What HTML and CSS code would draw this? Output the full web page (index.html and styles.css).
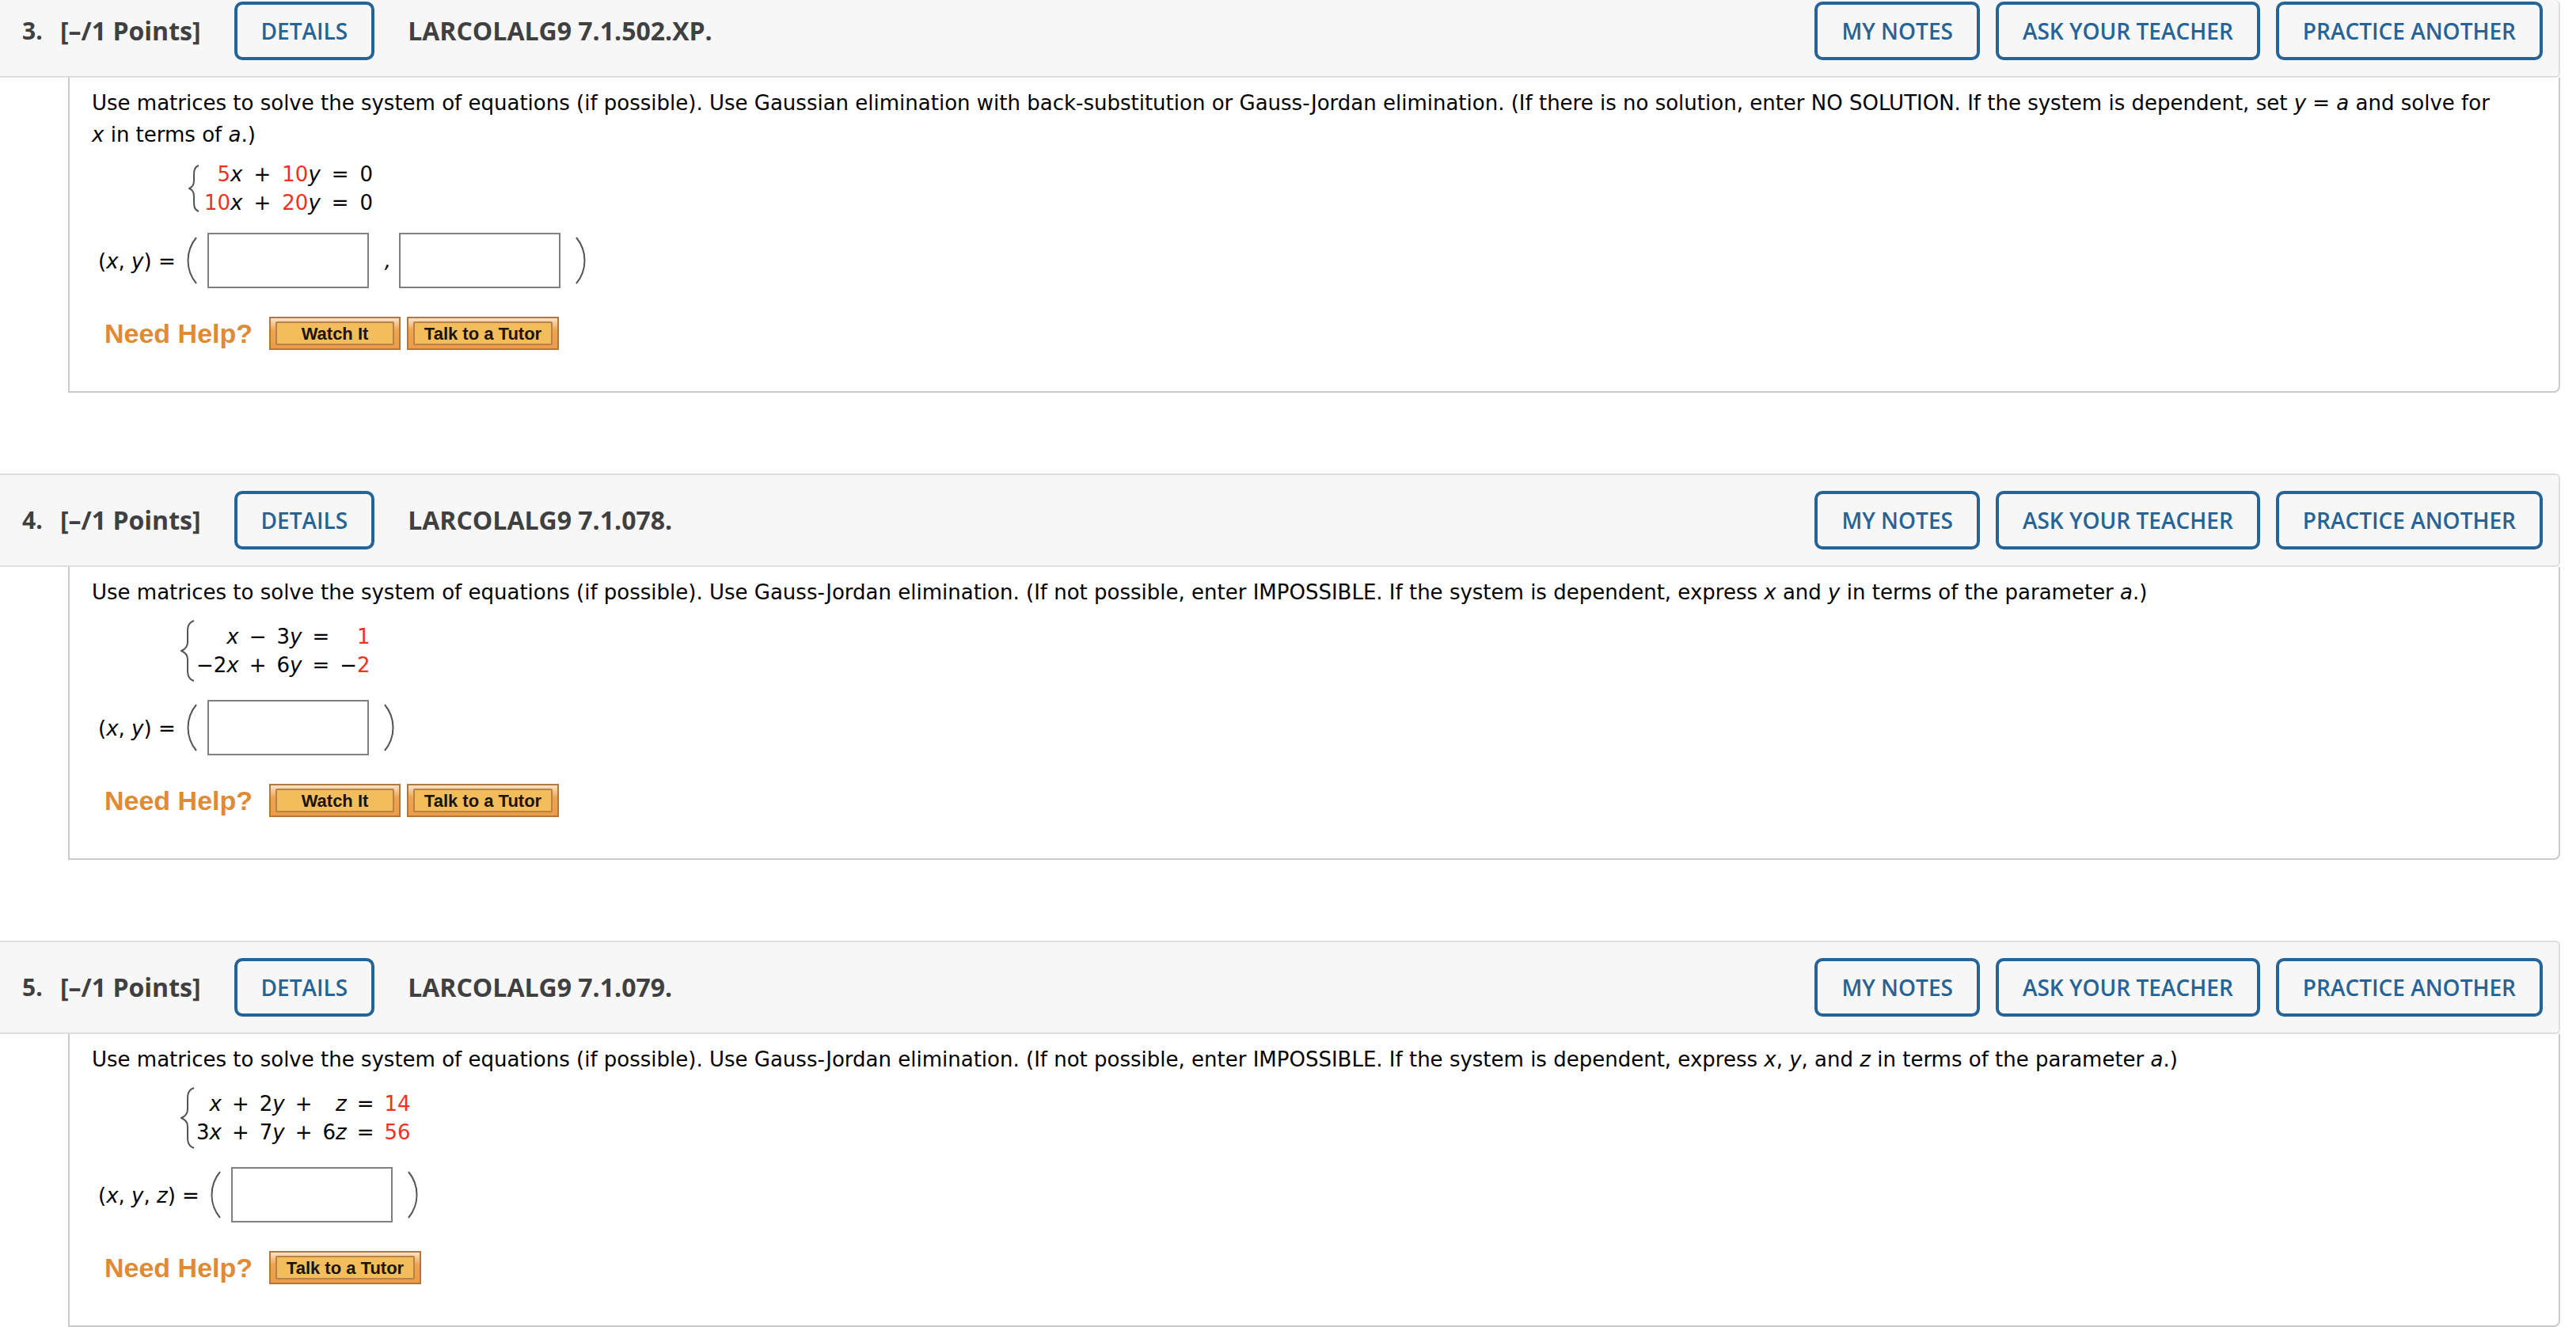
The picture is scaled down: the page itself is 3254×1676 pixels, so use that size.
FILE: index.html
```
<!DOCTYPE html>
<html lang="en">
<head>
    <meta charset="UTF-8">
    <meta name="viewport" content="width=device-width, initial-scale=1.0">
    <title>Homework</title>
    <link rel="stylesheet" href="styles.css">
</head>
<body>

<div class="assignment">

    <!-- Question 3 -->
    <section class="question">
        <header class="question-header">
            <span class="number">3.</span>
            <span class="points">[–/1 Points]</span>
            <button class="btn btn-details" type="button">DETAILS</button>
            <span class="source">LARCOLALG9 7.1.502.XP.</span>
            <div class="actions">
                <button class="btn" type="button">MY NOTES</button>
                <button class="btn" type="button">ASK YOUR TEACHER</button>
                <button class="btn" type="button">PRACTICE ANOTHER</button>
            </div>
        </header>
        <div class="question-body">
            <p class="prompt">Use matrices to solve the system of equations (if possible). Use Gaussian elimination with back-substitution or Gauss-Jordan elimination. (If there is no solution, enter NO SOLUTION. If the system is dependent, set <i>y</i> = <i>a</i> and solve for <i>x</i>&nbsp;in terms of <i>a</i>.)</p>
            <div class="system system-short">
                <svg class="brace" viewBox="0 0 14 60"><path d="M13 1C7 3 7 9 7 14V20C7 26 5 28 1 30C5 32 7 34 7 40V46C7 51 7 57 13 59"/></svg>
                <table class="equations">
                    <tr><td><em>5</em><i>x</i></td><td class="op">+</td><td><em>10</em><i>y</i></td><td class="op">=</td><td>0</td></tr>
                    <tr><td><em>10</em><i>x</i></td><td class="op">+</td><td><em>20</em><i>y</i></td><td class="op">=</td><td>0</td></tr>
                </table>
            </div>
            <div class="answer">
                <label for="q3x">(<i>x</i>, <i>y</i>) =</label>
                <svg class="paren" viewBox="0 0 14 60"><path d="M12 1C-2 18 -2 42 12 59"/></svg>
                <input type="text" id="q3x">
                <i class="comma">,</i>
                <input type="text" id="q3y" aria-label="y">
                <svg class="paren close" viewBox="0 0 14 60"><path d="M2 1C16 18 16 42 2 59"/></svg>
            </div>
            <div class="help">
                <span class="help-title">Need Help?</span>
                <button class="help-btn watch" type="button"><span>Watch It</span></button>
                <button class="help-btn tutor" type="button"><span>Talk to a Tutor</span></button>
            </div>
        </div>
    </section>

    <!-- Question 4 -->
    <section class="question">
        <header class="question-header">
            <span class="number">4.</span>
            <span class="points">[–/1 Points]</span>
            <button class="btn btn-details" type="button">DETAILS</button>
            <span class="source">LARCOLALG9 7.1.078.</span>
            <div class="actions">
                <button class="btn" type="button">MY NOTES</button>
                <button class="btn" type="button">ASK YOUR TEACHER</button>
                <button class="btn" type="button">PRACTICE ANOTHER</button>
            </div>
        </header>
        <div class="question-body">
            <p class="prompt">Use matrices to solve the system of equations (if possible). Use Gauss-Jordan elimination. (If not possible, enter IMPOSSIBLE. If the system is dependent, express <i>x</i> and <i>y</i> in terms of the parameter <i>a</i>.)</p>
            <div class="system">
                <svg class="brace" viewBox="0 0 18 78"><path d="M17 1C9 4 9 10 9 16V28C9 34 6 37 1 39C6 41 9 44 9 50V62C9 68 9 74 17 77"/></svg>
                <table class="equations">
                    <tr><td><i>x</i></td><td class="op">−</td><td>3<i>y</i></td><td class="op">=</td><td><em>1</em></td></tr>
                    <tr><td>−2<i>x</i></td><td class="op">+</td><td>6<i>y</i></td><td class="op">=</td><td>−<em>2</em></td></tr>
                </table>
            </div>
            <div class="answer">
                <label for="q4">(<i>x</i>, <i>y</i>) =</label>
                <svg class="paren" viewBox="0 0 14 60"><path d="M12 1C-2 18 -2 42 12 59"/></svg>
                <input type="text" id="q4">
                <svg class="paren close" viewBox="0 0 14 60"><path d="M2 1C16 18 16 42 2 59"/></svg>
            </div>
            <div class="help">
                <span class="help-title">Need Help?</span>
                <button class="help-btn watch" type="button"><span>Watch It</span></button>
                <button class="help-btn tutor" type="button"><span>Talk to a Tutor</span></button>
            </div>
        </div>
    </section>

    <!-- Question 5 -->
    <section class="question">
        <header class="question-header">
            <span class="number">5.</span>
            <span class="points">[–/1 Points]</span>
            <button class="btn btn-details" type="button">DETAILS</button>
            <span class="source">LARCOLALG9 7.1.079.</span>
            <div class="actions">
                <button class="btn" type="button">MY NOTES</button>
                <button class="btn" type="button">ASK YOUR TEACHER</button>
                <button class="btn" type="button">PRACTICE ANOTHER</button>
            </div>
        </header>
        <div class="question-body">
            <p class="prompt">Use matrices to solve the system of equations (if possible). Use Gauss-Jordan elimination. (If not possible, enter IMPOSSIBLE. If the system is dependent, express <i>x</i>, <i>y</i>, and <i>z</i> in terms of the parameter <i>a</i>.)</p>
            <div class="system">
                <svg class="brace" viewBox="0 0 18 78"><path d="M17 1C9 4 9 10 9 16V28C9 34 6 37 1 39C6 41 9 44 9 50V62C9 68 9 74 17 77"/></svg>
                <table class="equations">
                    <tr><td><i>x</i></td><td class="op">+</td><td>2<i>y</i></td><td class="op">+</td><td><i>z</i></td><td class="op">=</td><td><em>14</em></td></tr>
                    <tr><td>3<i>x</i></td><td class="op">+</td><td>7<i>y</i></td><td class="op">+</td><td>6<i>z</i></td><td class="op">=</td><td><em>56</em></td></tr>
                </table>
            </div>
            <div class="answer">
                <label for="q5">(<i>x</i>, <i>y</i>, <i>z</i>) =</label>
                <svg class="paren" viewBox="0 0 14 60"><path d="M12 1C-2 18 -2 42 12 59"/></svg>
                <input type="text" id="q5">
                <svg class="paren close" viewBox="0 0 14 60"><path d="M2 1C16 18 16 42 2 59"/></svg>
            </div>
            <div class="help">
                <span class="help-title">Need Help?</span>
                <button class="help-btn tutor" type="button"><span>Talk to a Tutor</span></button>
            </div>
        </div>
    </section>

</div>

</body>
</html>
```

FILE: styles.css
```
* {
    box-sizing: border-box;
}
body {
    margin: 0;
    background-color: #fff;
    color: #000;
    font-family: Verdana, "DejaVu Sans", sans-serif;
    font-size: 26px;
    line-height: 40px;
}
.assignment {
    padding-right: 20px;
}
.question {
    margin-bottom: 102px;
}
.question:last-child {
    margin-bottom: 0;
}

/* Header bar */
.question-header {
    display: flex;
    align-items: center;
    padding: 20px 20px 20px 28px;
    border: 2px solid #dedede;
    border-left: none;
    border-radius: 0 6px 6px 0;
    background-color: #f7f7f7;
    color: #404040;
    font-family: "Open Sans", sans-serif;
    font-size: 32px;
    font-weight: 700;
}
.question:first-child .question-header {
    padding-top: 2px;
    border-top: none;
}
.number {
    width: 48px;
    font-size: 30px;
}
.btn {
    height: 74px;
    padding: 0 30px;
    border: 4px solid #266396;
    border-radius: 10px;
    background-color: transparent;
    color: #266396;
    font-family: inherit;
    font-size: 28px;
    font-weight: 600;
    cursor: pointer;
}
.btn:hover {
    background-color: #e8f0f7;
}
.btn-details {
    margin: 0 42px;
}
.actions {
    display: flex;
    gap: 20px;
    margin-left: auto;
}

/* Question body */
.question-body {
    margin-left: 86px;
    padding: 12px 44px 52px 28px;
    border: 2px solid #cacaca;
    border-top: none;
    border-radius: 0 0 8px 0;
}
.prompt {
    margin: 0;
}
.system {
    display: flex;
    align-items: center;
    height: 84px;
    margin: 12px 0 20px 112px;
}
.system-short {
    height: 72px;
    margin-left: 122px;
}
.brace {
    width: 18px;
    height: 78px;
    fill: none;
    stroke: #555;
    stroke-width: 2;
}
.system-short .brace {
    width: 14px;
    height: 60px;
}
.equations {
    margin-left: 2px;
    border-collapse: collapse;
    line-height: 36px;
}
.system-short .equations {
    margin-left: 6px;
}
.equations td {
    padding: 0;
    text-align: right;
}
.equations .op {
    padding: 0 13px;
}
.system-short .op {
    padding: 0 14px;
}
.equations em {
    color: #ed3224;
    font-style: normal;
}
.answer {
    display: flex;
    align-items: center;
    height: 70px;
    padding-left: 8px;
}
.answer label {
    padding-top: 2px;
}
.answer input {
    width: 204px;
    height: 70px;
    padding: 0 8px;
    border: 2px solid #808080;
    background-color: #fff;
    font: inherit;
}
.paren {
    width: 14px;
    height: 60px;
    margin: 0 12px 0 14px;
    fill: none;
    stroke: #555;
    stroke-width: 2;
}
.close {
    margin-left: 18px;
}
.comma {
    width: 38px;
    padding-left: 20px;
}

/* Help links */
.help {
    display: flex;
    align-items: center;
    gap: 8px;
    margin-top: 36px;
    padding-left: 16px;
    font-family: "Liberation Sans", Arial, sans-serif;
    font-weight: 700;
}
.help-title {
    width: 200px;
    color: #e08a33;
    font-size: 34px;
}
.help-btn {
    display: flex;
    height: 42px;
    padding: 4px 6px;
    border: 2px solid #b0783c;
    background: linear-gradient(#fbe3c8, #f0a450 40%, #ec9c48);
    color: #1c1408;
    font: inherit;
    font-size: 22px;
    line-height: 28px;
    cursor: pointer;
}
.help-btn span {
    flex: 1;
    border: 2px solid #b98246;
    border-radius: 2px;
    background-color: #f4bd5b;
}
.watch {
    width: 166px;
}
.tutor {
    width: 192px;
}
```
